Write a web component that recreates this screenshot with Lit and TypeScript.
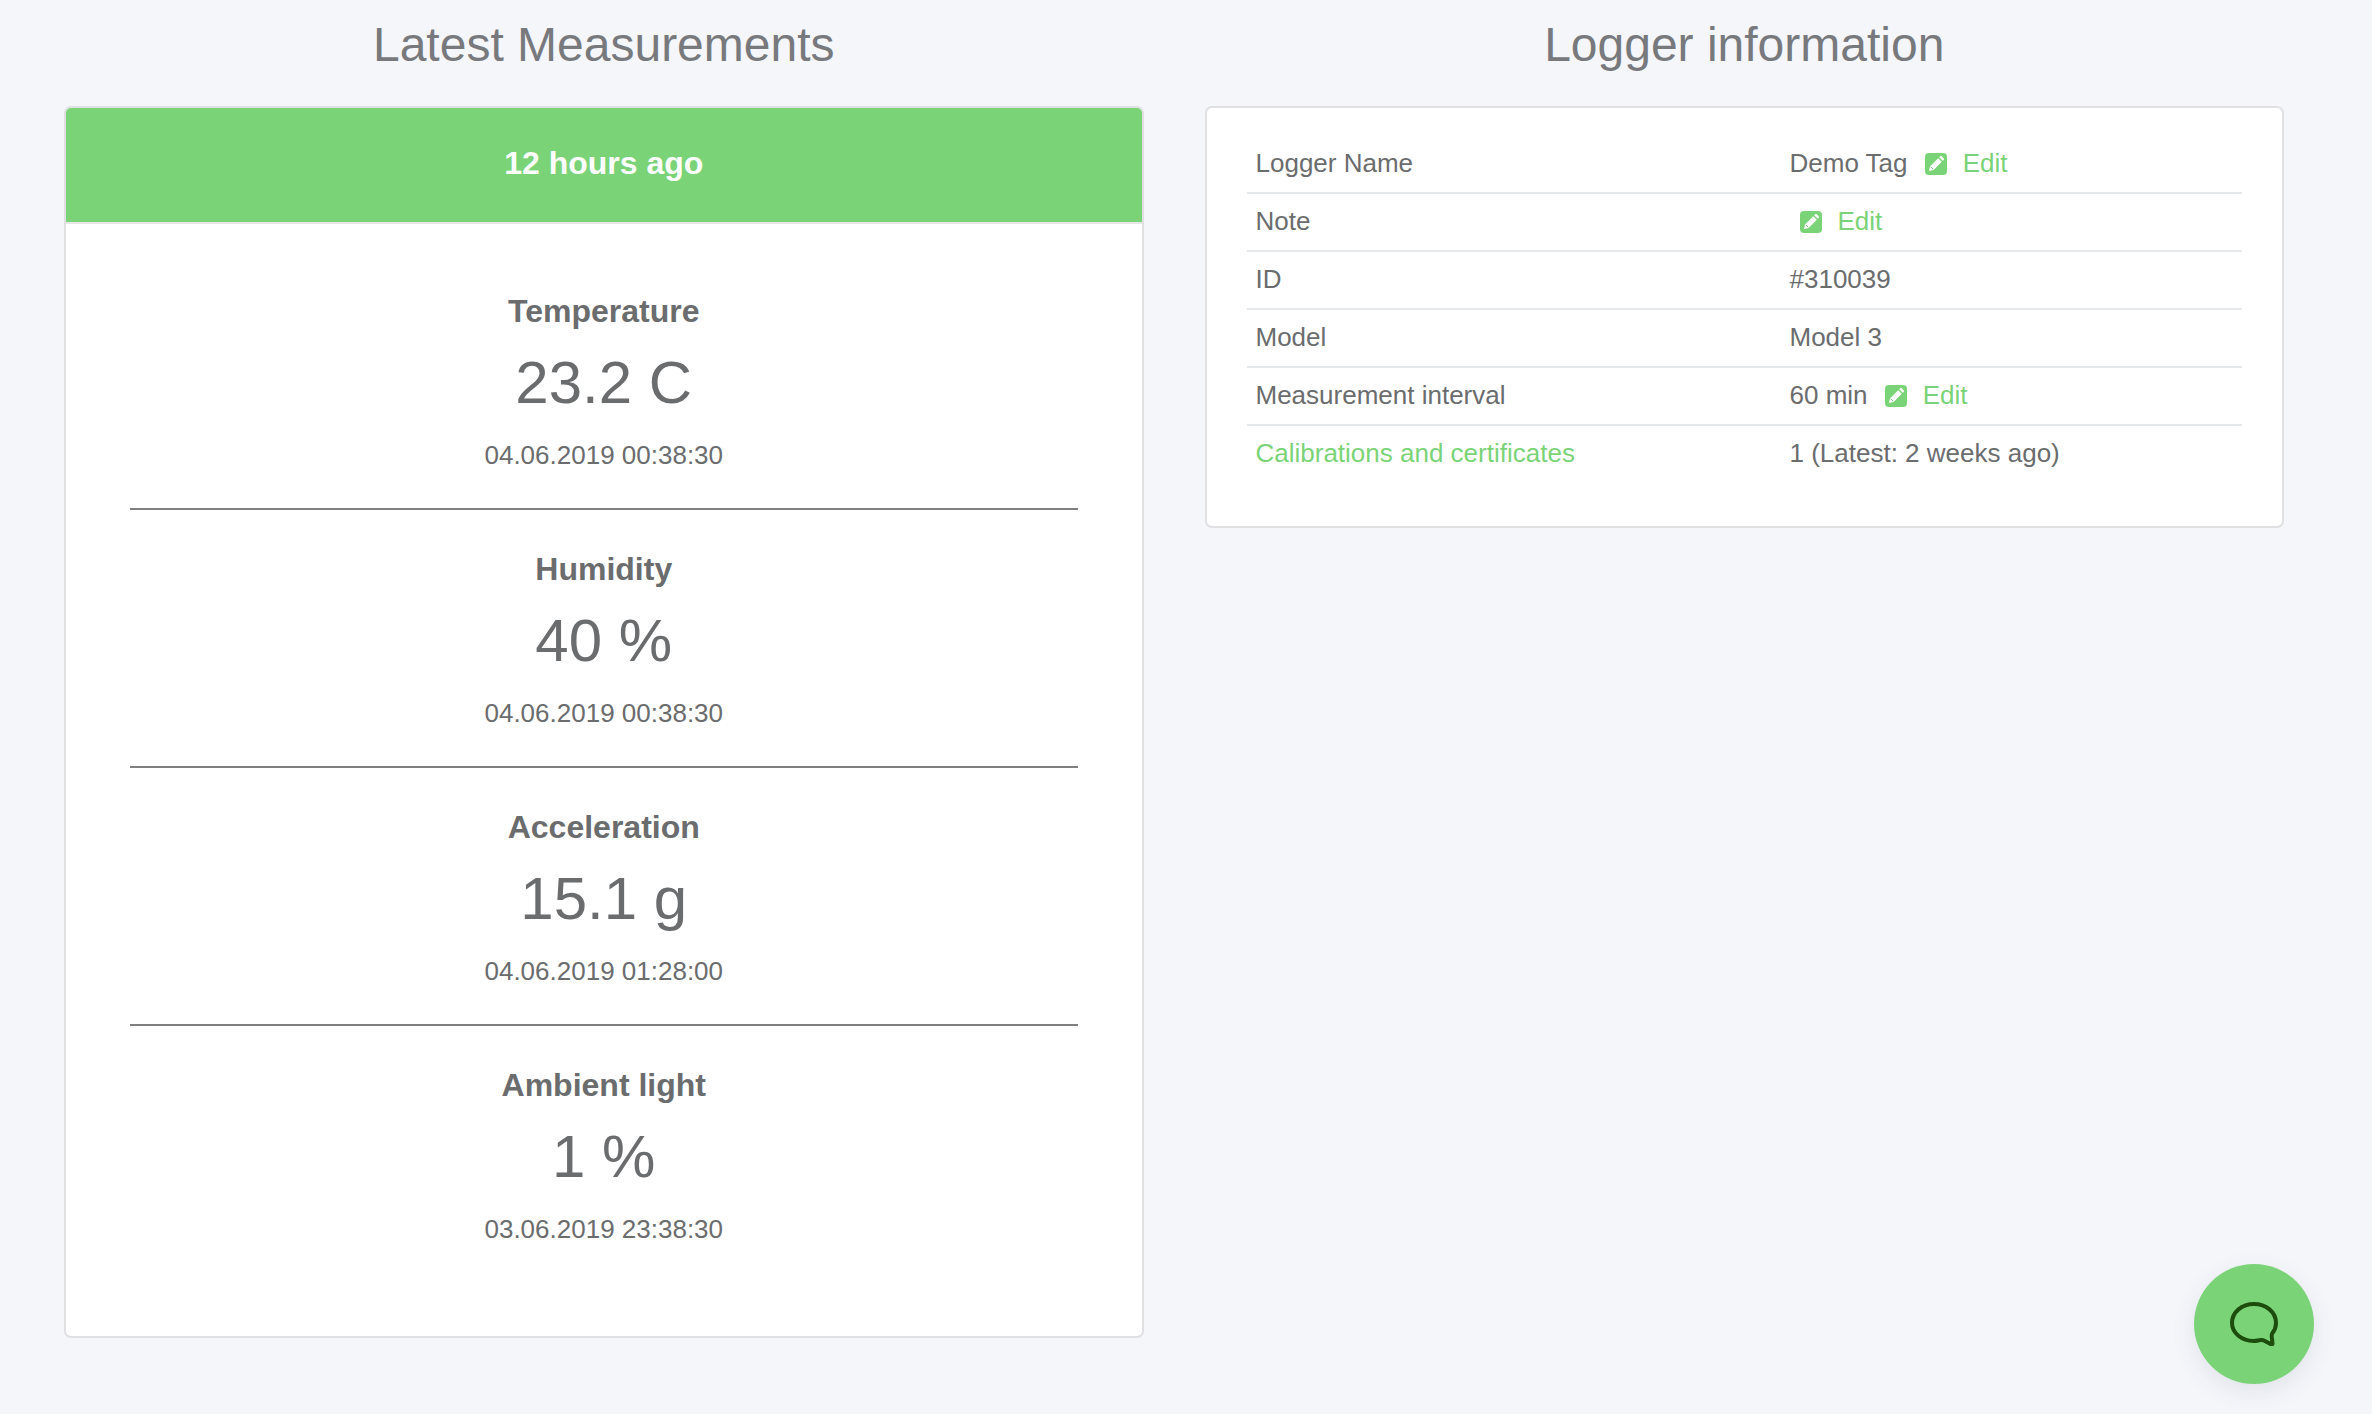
import { LitElement, html, css } from 'lit';
import { customElement } from 'lit/decorators.js';

const measurements = [
  { name: 'Temperature', value: '23.2 C', time: '04.06.2019 00:38:30' },
  { name: 'Humidity', value: '40 %', time: '04.06.2019 00:38:30' },
  { name: 'Acceleration', value: '15.1 g', time: '04.06.2019 01:28:00' },
  { name: 'Ambient light', value: '1 %', time: '03.06.2019 23:38:30' },
];

const editLink = html`<a class="edit"
  ><svg class="pencil" viewBox="0 0 22 22" aria-hidden="true">
    <rect width="22" height="22" rx="4" fill="#7bd378"></rect>
    <path d="M4 18l1-4.6 8.2-8.2 3.6 3.6-8.2 8.2z" fill="#fff"></path>
    <path d="M14.2 4.2l.9-.9c.5-.5 1.2-.5 1.7 0l1.9 1.9c.5.5.5 1.2 0 1.7l-.9.9z" fill="#fff"></path>
    <path d="M5.8 13.8l2.4 2.4" stroke="#7bd378" stroke-width="1" fill="none"></path>
  </svg>Edit</a
>`;

@customElement('app-root')
export class AppRoot extends LitElement {
  static styles = css`
    :host {
      display: block;
      min-height: 1414px;
      background: #f4f6fa;
      color: #6a6c6e;
      font-family: 'Liberation Sans', Arial, sans-serif;
      font-size: 26px;
    }
    .page {
      display: grid;
      grid-template-columns: 1fr 1fr;
      gap: 61px;
      align-items: start;
      padding: 0 88px 0 64px;
    }
    h2 {
      margin: 0 0 16px;
      font-size: 48px;
      font-weight: 400;
      line-height: 90px;
      text-align: center;
      color: #77797d;
    }
    .card {
      background: #fff;
      border: 2px solid #e0e0e2;
      border-radius: 7px;
      overflow: hidden;
    }
    .header {
      height: 114px;
      padding-bottom: 3px;
      box-sizing: border-box;
      display: flex;
      align-items: center;
      justify-content: center;
      background: #7bd378;
      color: #fff;
      font-size: 32px;
      font-weight: 700;
    }
    .body {
      border-top: 2px solid #e6e6e6;
      padding: 28px 64px 88px;
      text-align: center;
    }
    .measure {
      padding: 40px 0 34px;
      border-bottom: 2px solid #808080;
    }
    .measure:last-child {
      border-bottom: none;
      padding-bottom: 0;
    }
    .name {
      font-size: 32px;
      font-weight: 700;
      line-height: 38px;
    }
    .value {
      margin-top: 20px;
      font-size: 60px;
      line-height: 66px;
    }
    .time {
      margin-top: 20px;
      line-height: 38px;
    }
    .info {
      padding: 28px 40px 42px;
    }
    .row {
      display: grid;
      grid-template-columns: 534px 1fr;
      height: 58px;
      box-sizing: border-box;
      align-items: center;
      padding: 0 0 2px 9px;
      border-bottom: 2px solid #e6e9ec;
    }
    .row:last-child {
      border-bottom: none;
      padding-bottom: 4px;
    }
    .edit,
    .link {
      color: #7bd378;
    }
    .pencil {
      width: 22px;
      height: 22px;
      margin: 0 16px 0 10px;
      vertical-align: -3px;
    }
    .chat {
      position: fixed;
      left: 2194px;
      top: 1264px;
      width: 120px;
      height: 120px;
      border-radius: 50%;
      display: flex;
      align-items: center;
      justify-content: center;
      background: #7bd378;
      box-shadow: 0 8px 24px rgba(60, 70, 90, 0.1);
    }
    .chat svg {
      width: 48px;
      height: 44px;
    }
  `;

  render() {
    return html`
      <div class="page">
        <section>
          <h2>Latest Measurements</h2>
          <div class="card">
            <div class="header">12 hours ago</div>
            <div class="body">
              ${measurements.map(
                (m) => html`
                  <div class="measure">
                    <div class="name">${m.name}</div>
                    <div class="value">${m.value}</div>
                    <div class="time">${m.time}</div>
                  </div>
                `,
              )}
            </div>
          </div>
        </section>
        <section>
          <h2>Logger information</h2>
          <div class="card info">
            <div class="row"><span>Logger Name</span><span>Demo Tag ${editLink}</span></div>
            <div class="row"><span>Note</span><span>${editLink}</span></div>
            <div class="row"><span>ID</span><span>#310039</span></div>
            <div class="row"><span>Model</span><span>Model 3</span></div>
            <div class="row"><span>Measurement interval</span><span>60 min ${editLink}</span></div>
            <div class="row">
              <a class="link">Calibrations and certificates</a><span>1 (Latest: 2 weeks ago)</span>
            </div>
          </div>
        </section>
      </div>
      <div class="chat">
        <svg viewBox="0 0 48 44" fill="none" stroke="#1d4d0c" stroke-width="4" stroke-linejoin="round">
          <path
            d="M24 2C36 2 46 10 46 21c0 4-1.5 7.5-3.5 10-1 1.2-1 3-.5 6l.5 4c.2 1.2-.6 1.6-1.6 1.1l-7-3.6c-1.5-.8-3-.6-5-.2-1.5.3-2.6.7-5.4.7C12 39 2 31 2 21 2 10 12 2 24 2z"
          ></path>
        </svg>
      </div>
    `;
  }
}
